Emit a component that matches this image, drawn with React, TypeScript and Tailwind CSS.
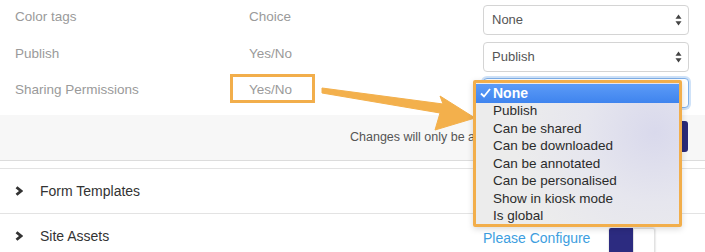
import React from "react";

function UpDown() {
  return (
    <svg width="7" height="12" viewBox="0 0 7 12" className="absolute right-[6px] top-1/2 -translate-y-1/2">
      <path d="M3.5 0.5 L6.5 4.8 L0.5 4.8 Z" fill="#444" />
      <path d="M3.5 11.5 L6.5 7.2 L0.5 7.2 Z" fill="#444" />
    </svg>
  );
}

function Select({ value, focused }: { value: string; focused?: boolean }) {
  return (
    <div
      className={
        focused
          ? "relative w-[206px] h-[30px] rounded-[4px] bg-white border border-[#7fb0ea] shadow-[0_0_0_2px_#cfe2f8] flex items-center pl-[8px] text-[13px] text-[#555]"
          : "relative w-[206px] h-[30px] rounded-[4px] bg-white border border-[#d4d4d4] flex items-center pl-[8px] text-[13px] text-[#555]"
      }
    >
      {value}
      <UpDown />
    </div>
  );
}

function Row({ label, type, value, focused }: { label: string; type: string; value: string; focused?: boolean }) {
  return (
    <div className="flex items-start h-[30px]">
      <div className="w-[234px] pt-[2px] leading-[20px] text-[13.5px] text-[#9a9a9a]">{label}</div>
      <div className="w-[234px] pt-[2px] leading-[20px] text-[13.5px] text-[#9a9a9a]">{type}</div>
      <Select value={value} focused={focused} />
    </div>
  );
}

function Chevron() {
  return (
    <svg width="8" height="10" viewBox="0 0 8 10">
      <path d="M1.5 1.2 L6 5 L1.5 8.8" fill="none" stroke="#333" strokeWidth="2.8" strokeLinejoin="miter" />
    </svg>
  );
}

function Check() {
  return (
    <svg width="11" height="10" viewBox="0 0 11 10">
      <path d="M1 5.5 L4 8.5 L10 1" fill="none" stroke="#fff" strokeWidth="1.8" />
    </svg>
  );
}

const items = [
  "Publish",
  "Can be shared",
  "Can be downloaded",
  "Can be annotated",
  "Can be personalised",
  "Show in kiosk mode",
  "Is global",
];

export default function App() {
  return (
    <div className="relative w-[705px] h-[252px] overflow-hidden bg-white font-['Liberation_Sans',Arial,sans-serif]">
      <div className="pl-[15px] pt-[5px] flex flex-col gap-[6.5px]">
        <Row label="Color tags" type="Choice" value="None" />
        <Row label="Publish" type="Yes/No" value="Publish" />
        <Row label="Sharing Permissions" type="Yes/No" value="None" focused />
      </div>

      <div className="mt-[7px] h-[46px] bg-[#f7f7f7] border-b border-[#dcdcdc] flex items-center pl-[350px] pr-[17px]">
        <span className="text-[12.5px] text-[#555] mt-[-1px]">Changes will only be applied after saving</span>
        <div className="ml-auto w-[70px] h-[31px] mt-[-2px] rounded-[3px] bg-[#2b2a78]" />
      </div>
      <div className="h-[8px] border-b border-[#e3e3e3]" />

      <div className="h-[45px] border-b border-[#e3e3e3] flex items-center pl-[15px]">
        <Chevron />
        <span className="ml-[17px] text-[14px] text-[#333]">Form Templates</span>
      </div>
      <div className="h-[44px] flex items-center pl-[15px]">
        <div className="w-[468px] flex items-center">
          <Chevron />
          <span className="ml-[17px] text-[14px] text-[#333]">Site Assets</span>
        </div>
        <div className="w-[126px] mt-[4px]">
          <span className="text-[14px] text-[#3d9ee0]">Please Configure</span>
        </div>
        <div className="self-start mt-[14px] flex h-[26px] rounded-[2px] shadow-[0_0_2px_rgba(0,0,0,0.25)]">
          <div className="w-[24px] bg-[#2c2b80] rounded-l-[2px]" />
          <div className="w-[22px] bg-white border border-[#e2e2e2] rounded-r-[2px]" />
        </div>
      </div>

      {/* orange box around Yes/No */}
      <div className="absolute left-[230px] top-[74px] w-[85px] h-[29px] border-[3px] border-[#f2ae4b]" />

      {/* arrow */}
      <svg className="absolute left-0 top-0" width="705" height="252" viewBox="0 0 705 252">
        <polygon
          points="322,88 443,104 440,96 475,118 435,130 440,113 322,93"
          fill="#f3b04c"
          strokeLinejoin="round"
          stroke="#f3b04c"
          strokeWidth="1"
        />
      </svg>

      {/* dropdown menu */}
      <div className="absolute left-[473px] top-[80px] w-[209px] h-[147px] border-[3px] border-[#f2ae4b] rounded-[2px] bg-[radial-gradient(circle_at_88%_35%,#d9d9ec_0%,#e6e6ee_35%,#ececec_70%)] shadow-[0_2px_6px_rgba(0,0,0,0.15)] pt-[1px] text-[13.5px]">
        <div className="h-[18.5px] flex items-center bg-[linear-gradient(#5c9bf7,#3f84ee)] text-white">
          <span className="w-[17px] pl-[4px] flex items-center">
            <Check />
          </span>
          <span className="text-[14px] font-semibold">None</span>
        </div>
        {items.map((t) => (
          <div key={t} className="h-[17.55px] flex items-center pl-[17px] text-[#2b2b2b]">
            {t}
          </div>
        ))}
      </div>
    </div>
  );
}
